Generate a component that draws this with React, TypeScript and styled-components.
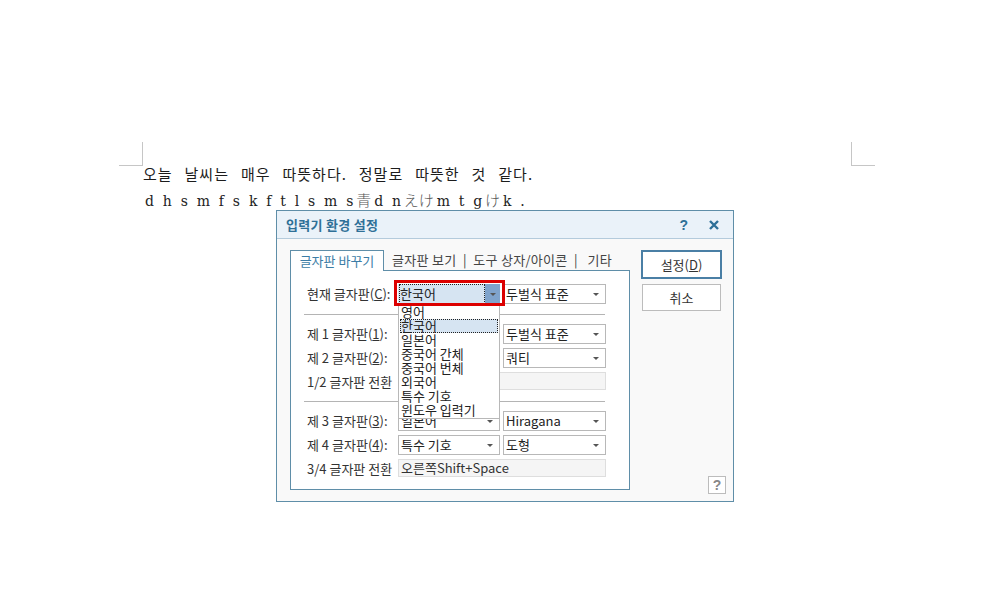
import React from "react";
import styled, { createGlobalStyle } from "styled-components";

const KOREAN = `"Noto Sans CJK KR", "Liberation Sans", sans-serif`;

const GlobalStyle = createGlobalStyle`
  html, body {
    margin: 0;
    background: #fff;
  }
  body {
    font-family: ${KOREAN};
    color: #222;
  }
`;

const Mnemonic: React.FC<{ before: string; letter: string }> = ({ before, letter }) => (
  <>
    {before}(<u>{letter}</u>):
  </>
);

export default function App() {
  return (
    <Page>
      <GlobalStyle />
      <CropRow>
        <CropMark $side="left" />
        <CropMark $side="right" />
      </CropRow>
      <DocText>
        <HangulLine>오늘 날씨는 매우 따뜻하다. 정말로 따뜻한 것 같다.</HangulLine>
        <LatinLine>
          d h s m f s k f t l s m s<Kanji>青</Kanji>d n<Kanji>えけ</Kanji>m t g
          <Kanji>け</Kanji>k .
        </LatinLine>
      </DocText>

      <Dialog>
        <TitleBar>
          <Title>입력기 환경 설정</Title>
          <TitleHelp>?</TitleHelp>
          <svg width="10" height="10" viewBox="0 0 10 10">
            <path d="M1 1L9 9M9 1L1 9" stroke="#2c6f98" strokeWidth="2.4" fill="none" />
          </svg>
        </TitleBar>
        <DialogBody>
          <LeftColumn>
            <Tabs>
              <ActiveTab>글자판 바꾸기</ActiveTab>
              <OtherTabs>글자판 보기 &nbsp;|&nbsp; 도구 상자/아이콘 &nbsp;|&nbsp;&nbsp; 기타</OtherTabs>
            </Tabs>
            <Panel>
              <FormRow>
                <Label>
                  <Mnemonic before="현재 글자판" letter="C" />
                </Label>
                <SelectSlot>
                  <FocusedSelect>
                    <FocusedValue>한국어</FocusedValue>
                    <FocusedArrow>
                      <Arrow />
                    </FocusedArrow>
                  </FocusedSelect>
                  <RedBox />
                  <DropList>
                    <DropItem>영어</DropItem>
                    <DropItemActive>한국어</DropItemActive>
                    <DropItem>일본어</DropItem>
                    <DropItem>중국어 간체</DropItem>
                    <DropItem>중국어 번체</DropItem>
                    <DropItem>외국어</DropItem>
                    <DropItem>특수 기호</DropItem>
                    <DropItem>윈도우 입력기</DropItem>
                  </DropList>
                </SelectSlot>
                <Select>
                  두벌식 표준
                  <Arrow />
                </Select>
              </FormRow>
              <Divider />
              <FormRow>
                <Label>
                  <Mnemonic before="제 1 글자판" letter="1" />
                </Label>
                <Select>
                  한국어
                  <Arrow />
                </Select>
                <Select>
                  두벌식 표준
                  <Arrow />
                </Select>
              </FormRow>
              <FormRow>
                <Label>
                  <Mnemonic before="제 2 글자판" letter="2" />
                </Label>
                <Select>
                  영어
                  <Arrow />
                </Select>
                <Select>
                  쿼티
                  <Arrow />
                </Select>
              </FormRow>
              <FormRow $short>
                <Label>1/2 글자판 전환</Label>
                <ReadOnlyField />
              </FormRow>
              <Divider />
              <FormRow>
                <Label>
                  <Mnemonic before="제 3 글자판" letter="3" />
                </Label>
                <Select>
                  일본어
                  <Arrow />
                </Select>
                <Select>
                  Hiragana
                  <Arrow />
                </Select>
              </FormRow>
              <FormRow>
                <Label>
                  <Mnemonic before="제 4 글자판" letter="4" />
                </Label>
                <Select>
                  특수 기호
                  <Arrow />
                </Select>
                <Select>
                  도형
                  <Arrow />
                </Select>
              </FormRow>
              <FormRow $short>
                <Label>3/4 글자판 전환</Label>
                <ReadOnlyField>오른쪽Shift+Space</ReadOnlyField>
              </FormRow>
            </Panel>
          </LeftColumn>
          <RightColumn>
            <PrimaryButton>
              설정(<u>D</u>)
            </PrimaryButton>
            <CancelButton>취소</CancelButton>
            <HelpButton>?</HelpButton>
          </RightColumn>
        </DialogBody>
      </Dialog>
    </Page>
  );
}

const Page = styled.div`
  position: relative;
  width: 989px;
  height: 595px;
  box-sizing: border-box;
  padding: 142px 0 0 119px;
  overflow: hidden;
`;

const CropRow = styled.div`
  display: flex;
  justify-content: space-between;
  width: 756px;
  margin-bottom: -5px;
`;

const CropMark = styled.div<{ $side: "left" | "right" }>`
  width: 23px;
  height: 23px;
  border-bottom: 1px solid #c6c6c6;
  border-${(p) => (p.$side === "left" ? "right" : "left")}: 1px solid #c6c6c6;
`;

const DocText = styled.div`
  margin-left: 24px;
  white-space: nowrap;
`;

const HangulLine = styled.div`
  font-size: 15px;
  line-height: 26px;
  letter-spacing: 1px;
  word-spacing: 7.6px;
  color: #1c1c1c;
`;

const LatinLine = styled.div`
  font-family: "DejaVu Serif", serif;
  font-size: 14px;
  line-height: 26px;
  height: 25px;
  padding-left: 2px;
  letter-spacing: 1.7px;
  word-spacing: 1px;
  color: #222;
`;

const Kanji = styled.span`
  font-family: "Noto Sans CJK JP", sans-serif;
  font-size: 15px;
  font-weight: 300;
  letter-spacing: 0;
  margin: 0 3px 0 1px;
  color: #555;
`;

const Dialog = styled.div`
  position: absolute;
  left: 276px;
  top: 210px;
  width: 458px;
  height: 292px;
  box-sizing: border-box;
  border: 1px solid #5f8ea8;
  background: #f9f9f9;
  font-size: 13px;
  display: flex;
  flex-direction: column;
`;

const TitleBar = styled.div`
  height: 28px;
  box-sizing: border-box;
  flex: none;
  display: flex;
  align-items: center;
  padding: 0 14px 0 9px;
  background: #eaf2f9;
  border-bottom: 1px solid #b4cbdc;
`;

const Title = styled.div`
  flex: 1;
  font-size: 13px;
  font-weight: 700;
  letter-spacing: 0.3px;
  color: #2f7097;
`;

const TitleHelp = styled.div`
  font-family: "Liberation Sans", sans-serif;
  font-size: 14px;
  font-weight: 700;
  color: #2f7097;
  margin-right: 21px;
`;

const DialogBody = styled.div`
  flex: 1;
  display: flex;
  gap: 11px;
  padding: 11px 7px 7px 13px;
`;

const LeftColumn = styled.div`
  width: 340px;
  flex: none;
  margin-bottom: 4px;
  display: flex;
  flex-direction: column;
`;

const Tabs = styled.div`
  display: flex;
  height: 21px;
  flex: none;
  margin-bottom: -1px;
  position: relative;
  z-index: 1;
`;

const ActiveTab = styled.div`
  width: 94px;
  box-sizing: border-box;
  height: 21px;
  border: 1px solid #5f8ea8;
  border-bottom: none;
  background: #fff;
  color: #3c7da6;
  text-align: center;
  line-height: 19px;
`;

const OtherTabs = styled.div`
  margin-left: 8px;
  line-height: 20px;
  letter-spacing: 0.3px;
  color: #444;
  white-space: pre;
`;

const Panel = styled.div`
  flex: 1;
  background: #fff;
  border: 1px solid #5f8ea8;
  padding: 13px 20px 0 13px;
  display: flex;
  flex-direction: column;
  gap: 4px;
`;

const FormRow = styled.div<{ $short?: boolean }>`
  display: grid;
  grid-template-columns: 94px 102px 106px;
  height: ${(p) => (p.$short ? 19 : 20)}px;
  align-items: start;
`;

const Label = styled.div`
  padding-left: 3px;
  color: #333;
  white-space: nowrap;
  line-height: 20px;
`;

const Select = styled.div`
  height: 20px;
  box-sizing: border-box;
  border: 1px solid #b8b8b8;
  background: #fff;
  padding: 0 6px 0 2px;
  display: flex;
  align-items: center;
  justify-content: space-between;
  color: #222;
  line-height: 18px;
  & + & {
    margin-left: 3px;
  }
`;

const Arrow = styled.span`
  width: 0;
  height: 0;
  flex: none;
  border-left: 3px solid transparent;
  border-right: 3px solid transparent;
  border-top: 3px solid #555;
`;

const SelectSlot = styled.div`
  position: relative;
  height: 20px;
  & + ${Select} {
    margin-left: 3px;
  }
`;

const FocusedSelect = styled.div`
  height: 20px;
  box-sizing: border-box;
  display: flex;
  background: #d6e4f2;
`;

const FocusedValue = styled.div`
  flex: 1;
  border: 1px dotted #222;
  line-height: 18px;
  color: #222;
  margin-left: 1px;
`;

const FocusedArrow = styled.div`
  width: 15px;
  background: #7fa3cc;
  display: flex;
  align-items: center;
  justify-content: center;
`;

const RedBox = styled.div`
  position: absolute;
  left: -4px;
  top: -4px;
  right: -5px;
  bottom: -2px;
  border: 3px solid #dc0000;
  z-index: 3;
`;

const DropList = styled.div`
  position: absolute;
  left: 0;
  top: 21px;
  width: 102px;
  box-sizing: border-box;
  height: 114px;
  padding: 0 1px;
  background: #fff;
  border: 1px solid #b8b8b8;
  border-top: none;
  z-index: 2;
`;

const DropItem = styled.div`
  height: 14px;
  line-height: 14px;
  padding-left: 1px;
  color: #222;
  white-space: nowrap;
`;

const DropItemActive = styled(DropItem)`
  box-sizing: border-box;
  background: #d6e4f2;
  border: 1px dotted #222;
  padding-left: 0;
  line-height: 12px;
`;

const ReadOnlyField = styled.div`
  grid-column: span 2;
  height: 18px;
  box-sizing: border-box;
  border: 1px solid #dedede;
  background: #f5f5f5;
  padding-left: 2px;
  line-height: 16px;
  color: #333;
`;

const Divider = styled.div`
  height: 1px;
  background: #b4b4b4;
  margin: 6px 0 5px 0;
  width: 301px;
`;

const RightColumn = styled.div`
  flex: 1;
  display: flex;
  flex-direction: column;
  align-items: flex-start;
`;

const PrimaryButton = styled.div`
  width: 81px;
  height: 29px;
  box-sizing: border-box;
  border: 2px solid #4a7fa5;
  background: #fff;
  text-align: center;
  line-height: 25px;
  color: #333;
`;

const CancelButton = styled.div`
  width: 79px;
  height: 27px;
  margin: 5px 0 0 1px;
  box-sizing: border-box;
  border: 1px solid #bcbcbc;
  background: #fff;
  text-align: center;
  line-height: 25px;
  color: #333;
`;

const HelpButton = styled.div`
  margin: auto 0 0 67px;
  width: 18px;
  height: 18px;
  box-sizing: border-box;
  border: 1px solid #bcbcbc;
  background: #fff;
  text-align: center;
  font-family: "Liberation Sans", sans-serif;
  font-size: 14px;
  font-weight: 700;
  line-height: 16px;
  color: #888;
`;
